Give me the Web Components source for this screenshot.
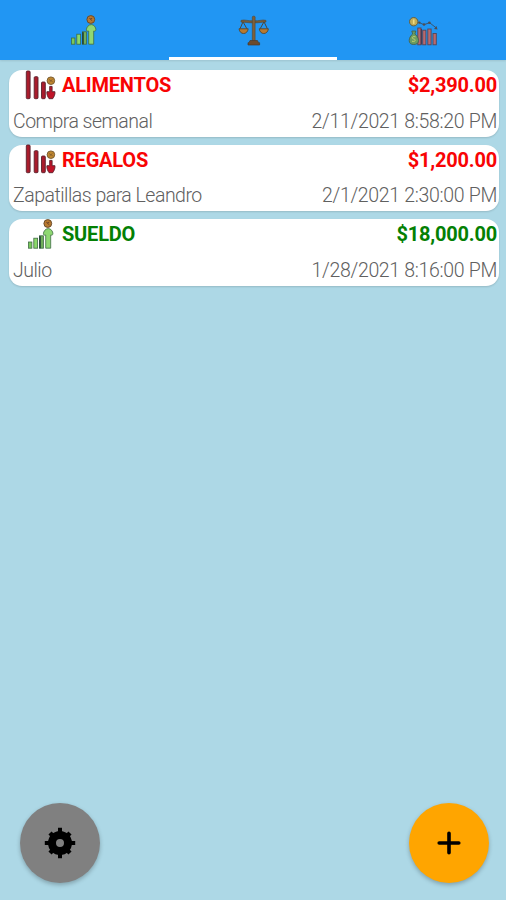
<!DOCTYPE html>
<html lang="es">
<head>
<meta charset="utf-8">
<title>Balance</title>
<style>
body {
  margin: 0;
  font-family: Roboto, "Liberation Sans", sans-serif;
}
</style>
</head>
<body>
<balance-app></balance-app>

<script>
(function() {

  const ICONS = {
    income: `
      <g stroke="#3f6b45" stroke-width=".8">
        <rect x="2.5" y="23" width="3.4" height="6.2" fill="#7ac95a"/>
        <rect x="7.8" y="19.2" width="3.8" height="10" fill="#8bd86a"/>
        <rect x="13.4" y="16.8" width="4" height="12.4" fill="#6fae5a"/>
        <path d="M14 17.2v12" stroke="#1d3a35" stroke-width="1.5"/>
        <path d="M22.3 9.6c2.6 0 4.7 2.8 4.6 5.2 0 1.2-1.2 1.6-2.2 1.2v13.2h-5V16c-1.2.4-2.3 0-2.3-1.2 0-2.4 2.1-5.2 4.9-5.2z" fill="#8fd872"/>
      </g>
      <circle cx="21.8" cy="4.5" r="3.9" fill="#b9792f" stroke="#684b2c"/>
      <path d="M20.3 3.2l3 2.6M23.3 3.2l-2 .6" stroke="#6e4527" fill="none"/>`,
    balance: `
      <path d="M5 6.8L1.9 14M5 6.8L9 14M26 6.8L22 14M26 6.8L29.5 14" fill="none" stroke="#4d4638"/>
      <path d="M3 5.4c4-1.2 7 .8 12.7.4 5.7.4 8.7-1.6 12.3-.4v1.7c-4 0-7 .8-12.3.8S7 7.1 3 7.1z" fill="#795c35" stroke="#4d4638" stroke-width=".6"/>
      <rect x="14.3" y="1.2" width="2.8" height="25.5" rx="1" fill="#80603a" stroke="#4d4638" stroke-width=".6"/>
      <path d="M1 13.8h9.2c-.5 3-2.2 4.7-4.6 4.7S1.5 16.8 1 13.8zM21.2 13.8h9.2c-.5 3-2.2 4.7-4.6 4.7s-4.1-1.7-4.6-4.7z" fill="#b87a30" stroke="#554630" stroke-width=".9"/>
      <path d="M12 25.5h7.4l1.2 2.2h1v2.3H10v-2.3h1z" fill="#6c4b2d" stroke="#493b2d" stroke-width=".7"/>`,
    outcome: `
      <g fill="#b9686c" stroke="#51475a" stroke-width=".9">
        <rect x="10.8" y="13" width="3.2" height="16.8"/>
        <rect x="15.7" y="15.2" width="3.2" height="14.6"/>
        <rect x="20.8" y="14" width="3.3" height="15.8"/>
        <rect x="26" y="18.5" width="3.3" height="11.3"/>
      </g>
      <path d="M14.3 14v15.5" stroke="#452f43"/>
      <path d="M12 7.5l5 2.2 5.5-2 6.5 5" fill="none" stroke="#365777"/>
      <g fill="#504d52"><circle cx="12.3" cy="7.6" r="1.2"/><circle cx="17" cy="9.5" r="1.3"/><circle cx="22.4" cy="7.8" r="1.3"/><path d="M30.5 14.5l-3.5-.6 2.5-3z"/></g>
      <circle cx="6.7" cy="6.7" r="4.2" fill="#c4ad58" stroke="#615f44"/>
      <path d="M6.7 4.5v4.4" stroke="#f0dc86" stroke-width="1.6"/>
      <path d="M4.8 16h4l-.9 3c2.2 1.5 3.6 4.3 3.6 6.5 0 2.7-1.8 4-4.7 4s-4.6-1.3-4.6-4c0-2.2 1.3-5 3.5-6.5z" fill="#6a9c62" stroke="#436250" stroke-width=".9"/>
      <path d="M8.5 21.8c-3.5-1-4.3 1.7-1.7 2.2s1.6 3.2-1.8 2.2" fill="none" stroke="#c7d36d"/>`,
    expense: `
      <g fill="#a91c2c" stroke="#57202b" stroke-width=".9">
        <rect x="2.3" y="2" width="3.8" height="27.7" rx="1"/>
        <rect x="10.2" y="7.7" width="3.8" height="22" rx="1"/>
        <rect x="17.5" y="13" width="3.8" height="16.7" rx="1"/>
        <path d="M25.7 17.4h2.4v5.3h2.8c.5 2.7-1.2 5.6-2.2 7h-3.6c-1-1.4-2.7-4.3-2.2-7h2.8z" fill="#c01428"/>
      </g>
      <circle cx="26.9" cy="11.7" r="3.8" fill="#bf8730" stroke="#73562c" stroke-width=".9"/>
      <path d="M25 10.5l3.8 2.4M25.5 13l3-2.6" stroke="#80592c" stroke-width=".8"/>`,
    gear: `
      <g fill="none" stroke="#000">
        <circle cx="16" cy="16" r="8" stroke-width="8"/>
        <path d="M16 .8v5.2M16 26v5.2M.8 16H6M26 16h5.2" stroke-width="4"/>
        <path d="M6 6l4 4M22 22l4 4M26 6l-4 4M10 22l-4 4" stroke-width="4.4"/>
      </g>`,
    plus: `<path d="M16 6.2v19.6M6.2 16h19.6" fill="none" stroke="#000" stroke-width="3.6" stroke-linecap="round"/>`
  };

  // Attach an open shadow root filled with the given markup
  function render(element, html) {
    const template = document.createElement('template');
    template.innerHTML = html;
    element.attachShadow({mode: 'open'});
    element.shadowRoot.appendChild(template.content.cloneNode(true));
  }

  class AppIcon extends HTMLElement {
    static get observedAttributes() {
      return ['name'];
    }

    constructor() {
      super();
      render(this, `
<style>
:host {
  display: block;
  flex: none;
  width: 32px;
  height: 32px;
}
svg {
  display: block;
  width: 100%;
  height: 100%;
}
</style>
<svg viewBox="0 0 32 32" aria-hidden="true"></svg>`);
    }

    attributeChangedCallback(name, oldValue, value) {
      this.shadowRoot.querySelector('svg').innerHTML = ICONS[value] || '';
    }
  }

  class TabBar extends HTMLElement {
    constructor() {
      super();
      render(this, `
<style>
:host {
  display: flex;
  flex: none;
  height: 59.5px;
  background: #2196f3;
  box-shadow: 0 1px 2px rgba(0, 0, 0, .1);
}
</style>
<slot></slot>`);
    }
  }

  class TabItem extends HTMLElement {
    constructor() {
      super();
      render(this, `
<style>
:host {
  display: flex;
  flex: 1;
  justify-content: center;
  box-sizing: border-box;
  padding: 14.5px 0 0 2px;
  border-bottom: 3px solid transparent;
}
:host([selected]) {
  border-bottom-color: #fff;
}
</style>
<slot></slot>`);
    }
  }

  class MovementCard extends HTMLElement {
    constructor() {
      super();
      render(this, `
<style>
:host {
  --movement-color: #f80404;
  display: flex;
  flex-direction: column;
  box-sizing: border-box;
  height: 66.5px;
  padding: 0 2px 0 4px;
  border-radius: 13px;
  background: #fff;
  box-shadow: 0 1px 2px rgba(0, 0, 0, .14);
  white-space: nowrap;
}
:host([type="income"]) {
  --movement-color: #048004;
}
.main, .detail {
  display: flex;
  align-items: center;
  justify-content: space-between;
}
.main {
  height: 30.5px;
  color: var(--movement-color);
  font-size: 20px;
  font-weight: 700;
  letter-spacing: -.2px;
}
.category {
  display: flex;
  align-items: center;
  gap: 6px;
  padding-left: 11px;
}
app-icon {
  margin-top: -1px;
}
:host([type="income"]) .category {
  gap: 4px;
  padding-left: 13px;
}
:host([type="income"]) app-icon {
  margin-top: 1px;
}
.detail {
  padding-top: 8.4px;
  height: 25px;
  color: #606060;
  font-size: 19.5px;
  font-weight: 300;
  letter-spacing: -.32px;
}
slot[name="note"] {
  letter-spacing: -.5px;
}
</style>
<div class="main">
  <div class="category"><app-icon></app-icon><span><slot name="category"></slot></span></div>
  <span><slot name="amount"></slot></span>
</div>
<div class="detail">
  <slot name="note"></slot>
  <slot name="date"></slot>
</div>`);
      const type = this.getAttribute('type');
      this.shadowRoot.querySelector('app-icon').setAttribute('name', type);
    }
  }

  class RoundButton extends HTMLElement {
    constructor() {
      super();
      render(this, `
<style>
:host {
  display: block;
}
button {
  display: flex;
  align-items: center;
  justify-content: center;
  width: 80px;
  height: 80px;
  padding: 0;
  border: 0;
  border-radius: 50%;
  background: var(--button-bg, gray);
  box-shadow: 0 2px 4px rgba(0, 0, 0, .25);
}
</style>
<button><slot></slot></button>`);
      this.shadowRoot.querySelector('button').setAttribute('aria-label', this.getAttribute('label'));
    }
  }

  class BalanceApp extends HTMLElement {
    constructor() {
      super();
      render(this, `
<style>
:host {
  display: flex;
  flex-direction: column;
  height: 900px;
  background: #add8e6;
}
main {
  display: flex;
  flex: 1;
  flex-direction: column;
  gap: 8px;
  padding: 10.5px 7px 0 9px;
}
footer {
  display: flex;
  justify-content: space-between;
  padding: 0 17px 17px 19.6px;
}
.add {
  --button-bg: orange;
}
</style>
<tab-bar>
  <tab-item><app-icon name="income"></app-icon></tab-item>
  <tab-item selected><app-icon name="balance"></app-icon></tab-item>
  <tab-item><app-icon name="outcome"></app-icon></tab-item>
</tab-bar>
<main>
  <movement-card type="expense">
    <span slot="category">ALIMENTOS</span>
    <span slot="amount">$2,390.00</span>
    <span slot="note">Compra semanal</span>
    <span slot="date">2/11/2021 8:58:20 PM</span>
  </movement-card>
  <movement-card type="expense">
    <span slot="category">REGALOS</span>
    <span slot="amount">$1,200.00</span>
    <span slot="note">Zapatillas para Leandro</span>
    <span slot="date">2/1/2021 2:30:00 PM</span>
  </movement-card>
  <movement-card type="income">
    <span slot="category">SUELDO</span>
    <span slot="amount">$18,000.00</span>
    <span slot="note">Julio</span>
    <span slot="date">1/28/2021 8:16:00 PM</span>
  </movement-card>
</main>
<footer>
  <round-button label="Ajustes"><app-icon name="gear"></app-icon></round-button>
  <round-button class="add" label="Agregar"><app-icon name="plus"></app-icon></round-button>
</footer>`);
    }
  }

  window.customElements.define('app-icon', AppIcon);
  window.customElements.define('tab-bar', TabBar);
  window.customElements.define('tab-item', TabItem);
  window.customElements.define('movement-card', MovementCard);
  window.customElements.define('round-button', RoundButton);
  window.customElements.define('balance-app', BalanceApp);

}());
</script>
</body>
</html>
